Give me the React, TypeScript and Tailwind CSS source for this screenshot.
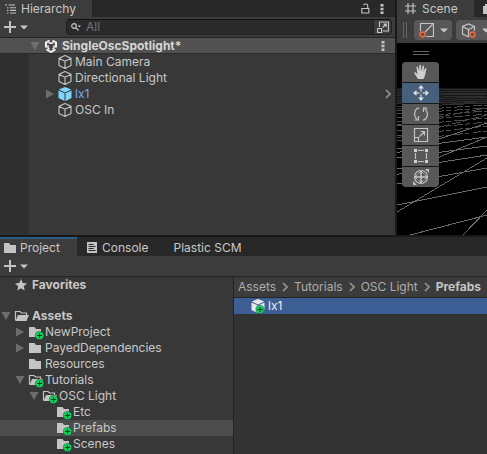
import React from "react";

const ICON = "shrink-0";

function Cube({ kind = "line" }: { kind?: "line" | "blue" | "white" }) {
  if (kind === "line") {
    return (
      <svg className={ICON} width="16" height="16" viewBox="0 0 16 16" fill="none" stroke="#c4c4c4" strokeWidth="1.1" strokeLinejoin="round">
        <path d="M8 1.500 14 4.200v7.300L8 14.500 2 11.500V4.200zM2 4.200 8 7.200l6-3M8 7.200v7.300" />
      </svg>
    );
  }
  const side = kind === "blue" ? "#7fd6fd" : "#e8e8e8";
  return (
    <svg className={`${ICON} overflow-visible`} width="16" height="16" viewBox="0 0 16 16">
      <path d="M8 1 14.200 3.600 8 6.400 1.800 3.600z" fill={side} />
      <path d="M1.500 4.500 7.500 7.200V15L1.500 12z" fill={side} />
      <path d="M14.500 4.500 8.500 7.200V15l6-3z" fill={side} />
      {kind === "white" && <Badge x={10} y={11.500} />}
    </svg>
  );
}

function Badge({ x, y }: { x: number; y: number }) {
  return (
    <g>
      <circle cx={x} cy={y} r="4.100" fill="#0fd05e" stroke="#15522f" strokeWidth="0.500" />
      <path d={`M${x - 2.5} ${y}h5M${x} ${y - 2.5}v5`} stroke="#123f25" strokeWidth="1.100" />
    </g>
  );
}

function Folder({ open, badge }: { open?: boolean; badge?: boolean }) {
  return (
    <svg className={`${ICON} overflow-visible`} width="16" height="16" viewBox="0 0 16 16">
      {open ? (
        <>
          <path d="M1.500 12.500V3.500h4.500l1.500 1.500h5v2" fill="none" stroke="#c4c4c4" strokeWidth="1.200" />
          <path d="M4 7h11l-2.500 6H1.500z" fill="#c4c4c4" />
        </>
      ) : (
        <path d="M1 3h5.500l1.500 2h5v8H1z" fill="#c4c4c4" />
      )}
      {badge && <Badge x={11.500} y={11.500} />}
    </svg>
  );
}

function Arrow({ down }: { down?: boolean }) {
  return (
    <svg className={ICON} width="10" height="10" viewBox="0 0 10 10" fill="#6e6e6e">
      {down ? <path d="M0.500 1h9L5 9z" /> : <path d="M1 0.500 9 5 1 9.500z" />}
    </svg>
  );
}

function Dots() {
  return (
    <svg width="4" height="12" viewBox="0 0 4 12" fill="#c4c4c4">
      <path d="M.5 1h3v2.500h-3zM.5 4.800h3v2.500h-3zM.5 8.600h3v2.500h-3z" />
    </svg>
  );
}

function Caret() {
  return (
    <svg width="8" height="5" viewBox="0 0 8 5" fill="#c4c4c4">
      <path d="M0 0.500h8L4 4.500z" />
    </svg>
  );
}

function AddButton() {
  return (
    <button aria-label="Add" className="flex items-center gap-1">
      <svg width="12" height="12" viewBox="0 0 12 12" fill="#c4c4c4">
        <path d="M5 0h2v5h5v2H7v5H5V7H0V5h5z" />
      </svg>
      <Caret />
    </button>
  );
}

function Chevron() {
  return (
    <svg className={ICON} width="6" height="10" viewBox="0 0 6 10" fill="none" stroke="#949494" strokeWidth="1.700">
      <path d="M1 1l4 4-4 4" />
    </svg>
  );
}

function Hierarchy() {
  return (
    <section className="flex min-w-0 flex-1 flex-col bg-[#383838]">
      <div className="flex h-[17px] justify-between bg-[#282828]">
        <button className="flex w-[92px] items-center gap-[5px] bg-[#3c3c3c] pl-[5px]">
          <svg width="11" height="10" viewBox="0 0 11 10" stroke="#c4c4c4" strokeWidth="1.100">
            <path d="M0 1h2M3.500 1H10M2 3.700h1.500M5 3.700h6M2 6.400h1.500M5 6.400h6M2 9h1.500M5 9h6" />
          </svg>
          Hierarchy
        </button>
        <div className="flex items-center gap-[10px] pr-[11px]">
          <button aria-label="Lock">
            <svg width="9" height="11" viewBox="0 0 9 11" fill="none" stroke="#c4c4c4" strokeWidth="1.100">
              <path d="M.8 5.500h7v4.500h-7zM6.700 5.500V2.500c0-2-4-2-4-.3" />
            </svg>
          </button>
          <button aria-label="Hierarchy menu"><Dots /></button>
        </div>
      </div>
      <div className="flex h-[21px] items-center border-b border-[#232323] bg-[#3c3c3c] pl-1 pr-[3px]">
        <AddButton />
        <div className="ml-[38px] flex h-4 flex-1 items-center overflow-hidden rounded border border-[#202020] border-t-[#111111] bg-[#2a2a2a]">
          <svg className="ml-1 shrink-0" width="10" height="8" viewBox="0 0 10 8" fill="none" stroke="#c4c4c4" strokeWidth="1.200">
            <circle cx="3" cy="3" r="2.300" />
            <path d="M4.600 4.600 7.500 7.500" />
            <path d="M6.500 2.500h3.500L8.300 4.600z" fill="#c4c4c4" stroke="none" />
          </svg>
          <input aria-label="Search hierarchy" placeholder="All" className="ml-[5px] min-w-0 flex-1 bg-transparent outline-none placeholder:text-[#747474]" />
          <button aria-label="Search by type" className="flex h-4 w-[18px] items-center justify-center border-l border-[#202020] bg-[#3c3c3c]">
            <svg width="12" height="12" viewBox="0 0 12 12" fill="none" stroke="#c4c4c4" strokeWidth="1.200">
              <path d="M2.500 6V1h9v9H6M.6 7.500h4v4h-4zM5.500 6.500 9 3.300M6.500 3.200h2.700V6" />
            </svg>
          </button>
        </div>
      </div>
      <div className="flex h-4 items-center border-b border-[#2b2b2b] bg-[#515151] pl-[30px] pr-[10px] font-bold text-[#d6d6d6]">
        <Arrow down />
        <svg className="ml-1 shrink-0" width="14" height="14" viewBox="0 0 14 14" fill="none" stroke="#f4f4f4" strokeWidth="2">
          <path d="M5.500 1.500 2 3.500v5M8.500 1.500 12 3.500v5M2.500 10.500 7 13l4.500-2.500" />
          <path d="M4 4.300 7 6l3-1.700M7 6v5" stroke="#383838" strokeWidth="1.200" />
          <path d="M4.500 3.500 7 4.500l2.500-1M4 6.500v2.500l1.500 1.500M10 6.500v2.500l-1.500 1.500" strokeWidth="1.500" />
        </svg>
        <span className="ml-1 flex-1">SingleOscSpotlight*</span>
        <button aria-label="Scene menu"><Dots /></button>
      </div>
      <div className="flex flex-1">
        <div className="w-[29px] shrink-0 bg-[#2f2f2f]" />
        <ul className="flex-1 pr-1">
          {["Main Camera", "Directional Light", "lx1", "OSC In"].map((name) => (
            <li key={name} className="flex h-4 items-center pl-4">
              {name === "lx1" ? <Arrow /> : <span className="w-[10px]" />}
              <span className="ml-[2px]"><Cube kind={name === "lx1" ? "blue" : "line"} /></span>
              <span className={`ml-[2px] flex-1 ${name === "lx1" ? "text-[#7fa8f0]" : ""}`}>{name}</span>
              {name === "lx1" && <Chevron />}
            </li>
          ))}
        </ul>
      </div>
    </section>
  );
}

const TOOLS = [
  {
    name: "Hand",
    icon: <path d="M5 15 1.500 9.500c-.7-1.300.6-1.800 1.300-.9l1.700 1.700L3.500 3.500c-.2-1.200 1.200-1.400 1.500-.3L6.200 7.500 6.300 1.600c0-1.200 1.500-1.200 1.600 0L8.300 7.500 9.500 2.200c.3-1.100 1.600-.8 1.500.4L10.500 8l1.500-3.500c.5-1 1.700-.5 1.400.6L12 11.500 10.500 15z" fill="#d0d0d0" stroke="none" />,
  },
  {
    name: "Move",
    icon: <><path d="M8 2v4.500M8 9.500v4.500M2 8h4.500M9.500 8h4.500" strokeWidth="1.500" /><path d="M8 0l3 3.500H5zM8 16l3-3.500H5zM0 8l3.500-3v6zM16 8l-3.500-3v6z" fill="#dedede" stroke="none" /></>,
  },
  {
    name: "Rotate",
    icon: <><path d="M6 1.800C.5 3 .5 11 4.500 13.500M10 14.200C15.500 13 15.500 5 11.500 2.500" /><path d="M1.500 14h4v-4M14.500 2h-4v4" /></>,
  },
  {
    name: "Scale",
    icon: <path d="M1.500 1.500h13v13h-13zM1.500 10.500h4v4M6.500 9.500l5-5M7.500 4.500h4v4" />,
  },
  {
    name: "Rect",
    icon: <><path d="M5 2.500h6M5 13.500h6M2.500 5v6M13.500 5v6" /><path d="M1 1h3v3H1zM12 1h3v3h-3zM1 12h3v3H1zM12 12h3v3h-3z" fill="#d0d0d0" stroke="none" /></>,
  },
  {
    name: "Transform",
    icon: <><circle cx="8" cy="8" r="6.500" /><path d="M8 2v12M2 8h12" strokeWidth="1.600" /><path d="M5.500 4.500 8 2l2.500 2.500M5.500 11.500 8 14l2.500-2.500M4.500 5.500 2 8l2.500 2.500M11.500 5.500 14 8l-2.500 2.500" strokeWidth=".9" /><path d="M12 0h4v4zM0 12v4h4z" fill="#c4c4c4" stroke="none" /></>,
  },
];

const NEAR_LINES = [
  "M0 162 90 144", "M13 192 90 172", "M0 169 90 115", "M66 192 90 167",
  "M0 141 90 125", "M0 126 90 112", "M0 132 90 94", "M0 115 90 103",
  "M0 106 90 94", "M0 110 90 80",
];

const FAR_LINES = [
  "M0 98 90 88", "M0 93 90 83", "M0 88 90 79", "M0 95 90 72",
  "M0 83 90 75", "M0 79 90 71", "M0 75 90 68", "M0 82 90 65",
  "M0 71 90 65", "M0 68 90 62",
];

const HORIZON_LINES = [
  "M0 46.500H90", "M0 48.500H90", "M0 50.500H90", "M0 53 90 51", "M0 55 90 53",
  "M0 57 90 54", "M0 59 90 56", "M0 61 90 58", "M0 64 90 60", "M0 66 90 58",
];

function Scene() {
  return (
    <section className="flex w-[90px] shrink-0 flex-col overflow-hidden bg-black">
      <div className="flex h-[17px] bg-[#282828]">
        <button className="flex w-[77px] shrink-0 items-center gap-[6px] bg-[#3c3c3c] pl-2">
          <svg width="11" height="11" viewBox="0 0 11 11" stroke="#c4c4c4" strokeWidth="1.200">
            <path d="M3 0v11M8 0v11M0 3h11M0 8h11" />
          </svg>
          Scene
        </button>
        <svg className="ml-[9px] mt-[2px] shrink-0" width="12" height="12" viewBox="0 0 12 12" fill="#c4c4c4">
          <path d="M2 2h2V0h4v2h4v10H0V4h2z" />
        </svg>
      </div>
      <div className="flex h-[26px] shrink-0 items-center bg-[#3c3c3c] pl-[6px]">
        <span className="h-4 w-1 shrink-0 border-x border-[#666666]" />
        <button aria-label="Draw mode" className="ml-[7px] flex h-5 w-[38px] shrink-0 items-center justify-center gap-[6px] rounded-sm bg-[#585858]">
          <svg width="15" height="15" viewBox="0 0 15 15" fill="none" stroke="#c4c4c4" strokeWidth="1.200">
            <path d="M1.500 8V.500h13v13H7M6 9l7.500-7.500" />
            <circle cx="3.500" cy="11.500" r="2.500" stroke="#f26b3e" strokeWidth="1.400" />
          </svg>
          <Caret />
        </button>
        <button aria-label="Gizmo mode" className="ml-1 flex h-5 w-[38px] shrink-0 items-center justify-center gap-[6px] rounded-sm bg-[#585858]">
          <svg width="15" height="15" viewBox="0 0 15 15" fill="none" stroke="#c4c4c4" strokeWidth="1.200">
            <path d="M8 14 1.500 11V3.500L7.500 1l6 2.500V8M1.500 3.500l6 3 6-3M7.500 6.500V14" />
            <circle cx="11.500" cy="11.500" r="2.500" stroke="#f26b3e" strokeWidth="1.400" />
          </svg>
          <Caret />
        </button>
      </div>
      <div className="relative flex-1">
        <svg className="absolute inset-0" width="90" height="192" viewBox="0 0 90 192" shapeRendering="crispEdges">
          <path d="M0 45h90v16H0z" fill="#151515" />
          <path d={HORIZON_LINES.join("")} stroke="#2e2e2e" />
          <path d={FAR_LINES.join("")} stroke="#4c4c4c" strokeDasharray="9 2 5 3" />
          <path d={NEAR_LINES.join("")} stroke="#6a6a6a" />
        </svg>
        <div className="relative ml-[5px] w-[37px] pt-2">
          <div className="mx-auto h-1 w-4 border-y border-[#666666]" />
          <div className="mt-[7px] flex flex-col gap-px overflow-hidden rounded bg-[#191919]">
            {TOOLS.map((t) => (
              <button key={t.name} aria-label={t.name} className={`flex h-5 items-center justify-center ${t.name === "Move" ? "bg-[#46607c]" : "bg-[#585858]"}`}>
                <svg width="16" height="16" viewBox="0 0 16 16" fill="none" stroke="#c4c4c4" strokeWidth="1.200">{t.icon}</svg>
              </button>
            ))}
          </div>
        </div>
      </div>
    </section>
  );
}

const TREE = [
  { name: "NewProject", pad: "pl-[15px]", arrow: "right", badge: true, open: false },
  { name: "PayedDependencies", pad: "pl-[15px]", arrow: "right", badge: false, open: false },
  { name: "Resources", pad: "pl-[15px]", arrow: "", badge: false, open: false },
  { name: "Tutorials", pad: "pl-[15px]", arrow: "down", badge: true, open: true },
  { name: "OSC Light", pad: "pl-[29px]", arrow: "down", badge: true, open: true },
  { name: "Etc", pad: "pl-[43px]", arrow: "", badge: true, open: false },
  { name: "Prefabs", pad: "pl-[43px]", arrow: "", badge: true, open: false },
  { name: "Scenes", pad: "pl-[43px]", arrow: "", badge: true, open: false },
];

function Project() {
  return (
    <section className="flex flex-1 flex-col border-t-2 border-[#191919] bg-[#383838]">
      <div className="flex h-[19px] bg-[#282828]">
        <button className="flex w-[77px] items-center gap-1 border-t-2 border-[#2c5d87] bg-[#3c3c3c] pl-1">
          <svg width="12" height="10" viewBox="0 0 12 10" fill="#c4c4c4"><path d="M0 0h5l1.500 2H12v8H0z" /></svg>
          Project
        </button>
        <button className="ml-[10px] flex items-center gap-[5px] pt-[2px]">
          <svg width="10" height="11" viewBox="0 0 10 11"><path d="M0 0h10v11H0z" fill="#c4c4c4" /><path d="M1.500 2.500h5M1.500 4.500h7M1.500 6.500h5M1.500 8.500h7" stroke="#282828" /></svg>
          Console
        </button>
        <button className="ml-[25px] pt-[2px]">Plastic SCM</button>
      </div>
      <div className="flex h-[21px] items-center border-b border-[#232323] bg-[#3c3c3c] pl-1"><AddButton /></div>
      <div className="flex flex-1">
        <div className="w-[234px] shrink-0 border-r border-[#232323]">
          <div className="flex h-4 items-center pl-[15px] font-bold">
            <svg width="12" height="12" viewBox="0 0 12 12" fill="#c4c4c4"><path d="M6 0l1.700 4 4.300.4-3.300 2.800 1 4.300L6 9.300l-3.700 2.200 1-4.300L0 4.400 4.300 4z" /></svg>
            <span className="ml-[5px]">Favorites</span>
          </div>
          <div className="mt-[15px] flex h-4 items-center pl-px font-bold">
            <Arrow down />
            <span className="ml-[3px]"><Folder open /></span>
            <span className="ml-[2px]">Assets</span>
          </div>
          <ul>
            {TREE.map((r) => (
              <li key={r.name} className={`flex h-4 items-center ${r.pad} ${r.name === "Prefabs" ? "bg-[#4d4d4d]" : ""}`}>
                {r.arrow ? <Arrow down={r.arrow === "down"} /> : <span className="w-[10px]" />}
                <span className="ml-[3px]"><Folder open={r.open} badge={r.badge} /></span>
                <span className="ml-px">{r.name}</span>
              </li>
            ))}
          </ul>
        </div>
        <div className="min-w-0 flex-1 bg-[#333333]">
          <nav className="flex h-[21px] items-center gap-[6px] border-b border-[#232323] bg-[#3c3c3c] pl-1 text-[#adadad]">
            <a href="#assets">Assets</a><Chevron />
            <a href="#tutorials">Tutorials</a><Chevron />
            <a href="#osc-light">OSC Light</a><Chevron />
            <a href="#prefabs" className="font-bold text-[#c4c4c4]">Prefabs</a>
          </nav>
          <div className="flex h-4 items-center bg-[#3e5f96] pl-4 text-[#eeeeee]">
            <Cube kind="white" />
            <span className="ml-[2px]">lx1</span>
          </div>
        </div>
      </div>
    </section>
  );
}

export default function App() {
  return (
    <main className="flex min-h-screen flex-col whitespace-nowrap bg-[#191919] font-['Inter',sans-serif] text-[12px] leading-4 text-[#c8c8c8]">
      <div className="flex h-[235px]">
        <Hierarchy />
        <div className="w-[2px] bg-[#191919]" />
        <Scene />
      </div>
      <Project />
    </main>
  );
}
